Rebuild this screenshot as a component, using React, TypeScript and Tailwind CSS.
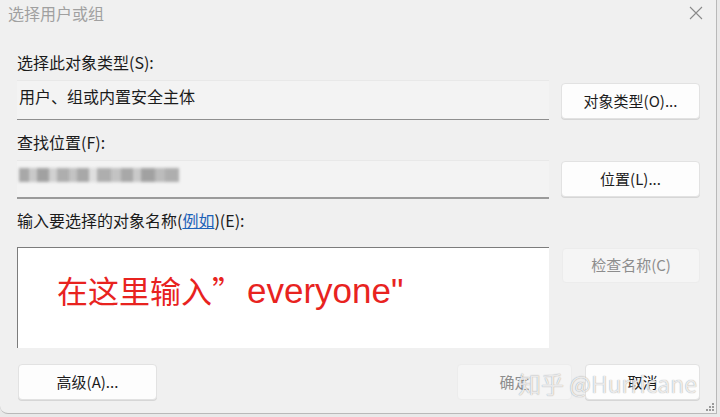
import React from 'react';

const font = "font-['Microsoft_YaHei','Noto_Sans_CJK_SC',sans-serif]";

function Btn({
  children,
  disabled,
  className = '',
}: {
  children: React.ReactNode;
  disabled?: boolean;
  className?: string;
}) {
  return (
    <button
      type="button"
      className={`flex items-center justify-center rounded-[4px] border text-[15px] ${
        disabled
          ? 'border-[#ececec] bg-[#f5f5f5] text-[#8d8d8d]'
          : 'border-[#e2e2e2] bg-[#fdfdfd] text-[#1b1b1b] shadow-[0_1px_0_#d6d6d6]'
      } ${className}`}
    >
      {children}
    </button>
  );
}

// Pixelated blur standing in for the hidden search location.
function BlurredText() {
  const blocks = [
    [10, 0.55], [8, 0.3], [12, 0.6], [8, 0.25], [12, 0.5], [8, 0.35], [12, 0.55],
    [8, 0.15], [14, 0.5], [10, 0.35], [12, 0.55], [8, 0.3], [14, 0.6], [10, 0.4], [14, 0.5],
  ];
  return (
    <div className="flex h-[20px] items-center blur-[1.5px]">
      {blocks.map(([w, o], i) => (
        <div key={i} className="h-[14px] bg-[#6a6a6a]" style={{ width: w, opacity: o }} />
      ))}
    </div>
  );
}

export default function App() {
  return (
    <div className={`relative h-[417px] w-[720px] overflow-hidden bg-[#e9e9e9] ${font}`}>
      <div className="flex h-[414px] w-[717px] flex-col rounded-bl-[8px] border-b border-r border-[#b9b9b9] bg-[#f0f0f0]">
        {/* title bar */}
        <div className="flex h-[25px] items-center justify-between pl-[8px] pr-[13px]">
          <span className="text-[16px] leading-[22px] text-[#a0a0a0]">选择用户或组</span>
          <svg width="14" height="14" viewBox="0 0 14 14" className="mt-[1px]">
            <path d="M1 1 L13 13 M13 1 L1 13" stroke="#8a8a8a" strokeWidth="1.1" />
          </svg>
        </div>

        <div className="flex flex-col pl-[17px] pr-[16px]">
          <div className="mt-[26px] h-[22px] text-[16px] leading-[22px] text-[#1b1b1b]">选择此对象类型(S):</div>
          <div className="mt-[7px] flex gap-[12px]">
            <div className="h-[40px] w-[532px] border-b border-[#8e8e8e] bg-[#f3f3f3] pl-[2px] pt-[5px] text-[16px] leading-[22px] text-[#1b1b1b] shadow-[inset_0_1px_0_#e8e8e8]">
              用户、组或内置安全主体
            </div>
            <Btn className="mt-[3px] h-[36px] w-[139px]">对象类型(O)...</Btn>
          </div>

          <div className="mt-[11px] h-[22px] text-[16px] leading-[22px] text-[#1b1b1b]">查找位置(F):</div>
          <div className="mt-[7px] flex gap-[12px]">
            <div className="h-[39px] w-[532px] border-b-2 border-[#9a9a9a] bg-[#f3f3f3] pl-[2px] pt-[5px] shadow-[inset_0_1px_0_#e8e8e8]">
              <BlurredText />
            </div>
            <Btn className="mt-[1px] h-[36px] w-[139px]">位置(L)...</Btn>
          </div>

          <div className="mt-[10px] h-[22px] text-[16px] leading-[22px] text-[#1b1b1b]">
            输入要选择的对象名称(<span className="text-[#1d62b8] underline">例如</span>)(E):
          </div>
          <div className="mt-[16px] flex gap-[13px]">
            <div className="h-[101px] w-[532px] border-l border-t border-[#7c7c7c] bg-white pl-[39px] pt-[22px] text-[31px] leading-[40px] text-[#e8231f]">
              在这里输入”<span className="ml-[4px] font-['Liberation_Sans','Noto_Sans_CJK_SC',sans-serif] text-[35px]">everyone"</span>
            </div>
            <Btn disabled className="mt-[1px] h-[35px] w-[138px]">检查名称(C)</Btn>
          </div>

          <div className="mt-[16px] flex items-center">
            <Btn className="ml-[1px] h-[36px] w-[139px]">高级(A)...</Btn>
            <div className="flex-1" />
            <Btn disabled className="h-[36px] w-[115px]">确定</Btn>
            <Btn className="ml-[13px] h-[36px] w-[115px]">取消</Btn>
          </div>
        </div>
      </div>

      {/* resize grip */}
      <div className="absolute bottom-[6px] right-[6px] grid grid-cols-3 gap-[1px]">
        {[0, 0, 1, 0, 1, 1, 1, 1, 1].map((v, i) => (
          <div key={i} className={`h-[2px] w-[2px] ${v ? 'bg-[#9a9a9a]' : ''}`} />
        ))}
      </div>

      {/* watermark */}
      <div className="pointer-events-none absolute left-[518px] top-[366px] text-[23px] leading-[34px] text-white/80 [text-shadow:0_0_1px_rgba(0,0,0,0.45)]">
        知乎 @Hurricane
      </div>
    </div>
  );
}
